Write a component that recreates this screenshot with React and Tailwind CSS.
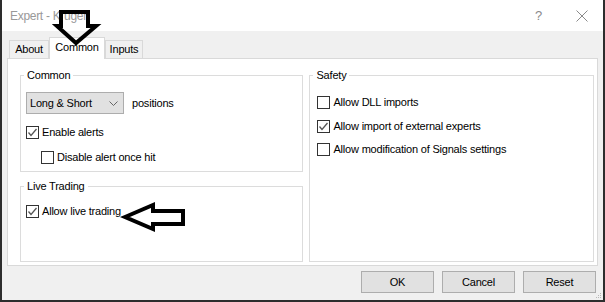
import { useState } from 'react';

function CheckBox({ label, checked, className = '' }) {
    return (
        <label className={`flex items-center h-[13px] ${className}`}>
            <span className="w-[13px] h-[13px] border border-[#333333] bg-white flex items-center justify-center shrink-0">
                {checked && (
                    <svg width="11" height="11" viewBox="0 0 11 11">
                        <polyline points="1.5,5.5 4,8.5 9.5,2" fill="none" stroke="#555" strokeWidth="1.3" />
                    </svg>
                )}
            </span>
            <span className="ml-[3px] leading-[13px]">{label}</span>
        </label>
    );
}

function Group({ title, children, className = '' }) {
    return (
        <fieldset className={`border border-[#dcdcdc] px-[5px] ${className}`}>
            <legend className="-ml-[2px] px-[3px] leading-[13px]">{title}</legend>
            {children}
        </fieldset>
    );
}

function Button({ children }) {
    return (
        <button className="w-[73px] h-[22px] bg-[#e1e1e1] border border-[#adadad] leading-[20px]">
            {children}
        </button>
    );
}

export default function App() {
    const [tab] = useState('Common');
    const tabs = [
        { name: 'About', w: 'w-[40px]' },
        { name: 'Common', w: 'w-[56px]' },
        { name: 'Inputs', w: 'w-[38px]' },
    ];

    return (
        <div className="relative w-[605px] h-[302px] bg-[#f0f0f0] border-x-2 border-b-2 border-[#2d2d2d] flex flex-col text-[11px] tracking-[-0.2px] text-black font-['Liberation_Sans',Arial,sans-serif]">
            {/* title bar */}
            <div className="h-[31px] bg-white flex items-center shrink-0">
                <span className="ml-[8px] text-[12px] tracking-[-0.3px] text-[#999999]">Expert - Kruger</span>
                <span className="ml-auto text-[13px] text-[#8a8a8a] mr-[34px]">?</span>
                <svg width="12" height="12" viewBox="0 0 12 12" className="mr-[15px]">
                    <path d="M0.5 0.5 L11.5 11.5 M11.5 0.5 L0.5 11.5" stroke="#8a8a8a" strokeWidth="1" />
                </svg>
            </div>

            <div className="flex-1 flex flex-col px-[5px]">
                {/* tabs */}
                <div className="flex items-end h-[27px] pl-[2px]">
                    {tabs.map((t) =>
                        t.name === tab ? (
                            <div
                                key={t.name}
                                className={`${t.w} h-[22px] -mb-px relative z-10 bg-white border border-b-0 border-[#d9d9d9] flex items-center justify-center pb-[2px]`}
                            >
                                {t.name}
                            </div>
                        ) : (
                            <div
                                key={t.name}
                                className={`${t.w} h-[18px] border border-b-0 border-[#d9d9d9] bg-[#f0f0f0] flex items-center justify-center`}
                            >
                                {t.name}
                            </div>
                        )
                    )}
                </div>

                {/* panel */}
                <div className="h-[208px] bg-white border border-[#d9d9d9] flex gap-[6px] pl-[12px] pr-[3px] pt-[10px] pb-[3px]">
                    <div className="w-[284px] flex flex-col">
                        <Group title="Common" className="pb-[7px]">
                            <div className="flex items-center mt-[10px] h-[22px]">
                                <div className="w-[98px] h-[22px] bg-[#e1e1e1] border border-[#adadad] flex items-center pl-[3px] pr-[5px]">
                                    <span>Long &amp; Short</span>
                                    <svg width="9" height="5" viewBox="0 0 9 5" className="ml-auto">
                                        <polyline points="0.5,0.5 4.5,4.5 8.5,0.5" fill="none" stroke="#666" strokeWidth="1" />
                                    </svg>
                                </div>
                                <span className="ml-[8px]">positions</span>
                            </div>
                            <CheckBox label="Enable alerts" checked className="mt-[12px]" />
                            <CheckBox label="Disable alert once hit" className="mt-[12px] ml-[15px]" />
                        </Group>
                        <Group title="Live Trading" className="flex-1 mt-[8px]">
                            <CheckBox label="Allow live trading" checked className="mt-[12px]" />
                        </Group>
                    </div>
                    <Group title="Safety" className="w-[285px]">
                        <CheckBox label="Allow DLL imports" className="mt-[14px] ml-[2px]" />
                        <CheckBox label="Allow import of external experts" checked className="mt-[11px] ml-[2px]" />
                        <CheckBox label="Allow modification of Signals settings" className="mt-[10px] ml-[2px]" />
                    </Group>
                </div>

                {/* buttons */}
                <div className="flex justify-end gap-[8px] mt-[5px] pr-[2px]">
                    <Button>OK</Button>
                    <Button>Cancel</Button>
                    <Button>Reset</Button>
                </div>
            </div>

            {/* size grip */}
            <svg width="6" height="6" viewBox="0 0 6 6" className="absolute right-[1px] bottom-[1px]">
                <rect x="4" y="0" width="1" height="1" fill="#b8b8b8" />
                <rect x="2" y="2" width="1" height="1" fill="#b8b8b8" />
                <rect x="4" y="2" width="1" height="1" fill="#b8b8b8" />
                <rect x="0" y="4" width="1" height="1" fill="#b8b8b8" />
                <rect x="2" y="4" width="1" height="1" fill="#b8b8b8" />
                <rect x="4" y="4" width="1" height="1" fill="#b8b8b8" />
            </svg>

            {/* annotation arrows */}
            <svg width="605" height="302" className="absolute left-[-2px] top-0 pointer-events-none z-20">
                <polygon
                    points="61,12 88,12 88,26 96,26 76,43 57,26 61,26"
                    fill="none"
                    stroke="#000"
                    strokeWidth="4"
                    strokeLinejoin="miter"
                />
                <polygon
                    points="125,217 153,205 153,211 183,211 183,224 153,224 153,229"
                    fill="none"
                    stroke="#000"
                    strokeWidth="4"
                    strokeLinejoin="miter"
                />
            </svg>
        </div>
    );
}
